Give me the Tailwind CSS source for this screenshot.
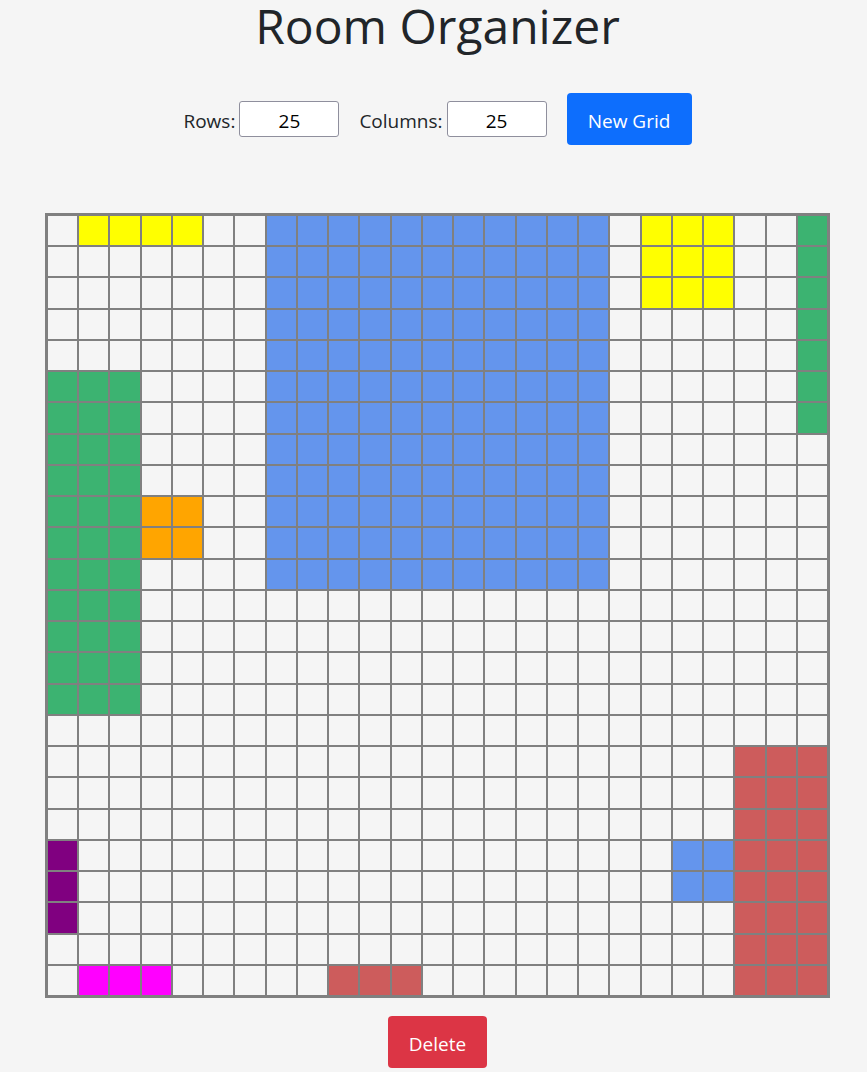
<!DOCTYPE html>
<html lang="en">
<head>
<meta charset="utf-8">
<meta name="viewport" content="width=device-width, initial-scale=1">
<title>Room Organizer</title>
<script src="https://cdn.jsdelivr.net/npm/@tailwindcss/browser@4"></script>
</head>
<body class="bg-[#f5f5f5] pl-2 font-['Segoe_UI','Open_Sans','Noto_Sans',sans-serif] text-[19px] leading-[30px] text-[#212529]">
<main class="flex flex-col items-center">
  <h1 class="text-[48px] leading-[52px]">Room Organizer</h1>
  <form class="mt-[41px] flex items-center justify-center gap-5" onsubmit="return false">
    <div class="flex items-center gap-1">
      <label for="rows" class="pt-1">Rows:</label>
      <input id="rows" type="text" inputmode="numeric" value="25" class="h-9 w-[100px] rounded-[3px] border border-[#8f8f9d] bg-white pt-1 text-center text-black">
    </div>
    <div class="flex items-center gap-1">
      <label for="columns" class="pt-1">Columns:</label>
      <input id="columns" type="text" inputmode="numeric" value="25" class="h-9 w-[100px] rounded-[3px] border border-[#8f8f9d] bg-white pt-1 text-center text-black">
    </div>
    <button type="submit" class="h-[52px] w-[125px] rounded bg-[#0d6efd] pt-1 text-white">New Grid</button>
  </form>
  <div id="room" class="mt-[68px] grid aspect-square w-full max-w-[785px] grid-cols-25 grid-rows-25 gap-[2px] border-3 border-[#808080] bg-[#808080]"></div>
  <button type="button" class="mt-[18px] mb-1 h-[52px] w-[99px] rounded bg-[#dc3545] pt-1 text-white">Delete</button>
</main>
<script>
  // Furniture: first row, first column, height, width, colour class
  const items = [
    [0, 1, 1, 4, 'bg-[#ffff00]'],
    [0, 7, 12, 11, 'bg-[#6495ed]'],
    [0, 19, 3, 3, 'bg-[#ffff00]'],
    [0, 24, 7, 1, 'bg-[#3cb371]'],
    [5, 0, 11, 3, 'bg-[#3cb371]'],
    [9, 3, 2, 2, 'bg-[#ffa500]'],
    [17, 22, 8, 3, 'bg-[#cd5c5c]'],
    [20, 0, 3, 1, 'bg-[#800080]'],
    [20, 20, 2, 2, 'bg-[#6495ed]'],
    [24, 1, 1, 3, 'bg-[#ff00ff]'],
    [24, 9, 1, 3, 'bg-[#cd5c5c]'],
  ];
  const room = document.getElementById('room');
  for (let r = 0; r < 25; r++) {
    for (let c = 0; c < 25; c++) {
      const item = items.find(([y, x, h, w]) => r >= y && r < y + h && c >= x && c < x + w);
      const cell = document.createElement('div');
      cell.className = item ? item[4] : 'bg-[#f5f5f5]';
      room.append(cell);
    }
  }
</script>
</body>
</html>
